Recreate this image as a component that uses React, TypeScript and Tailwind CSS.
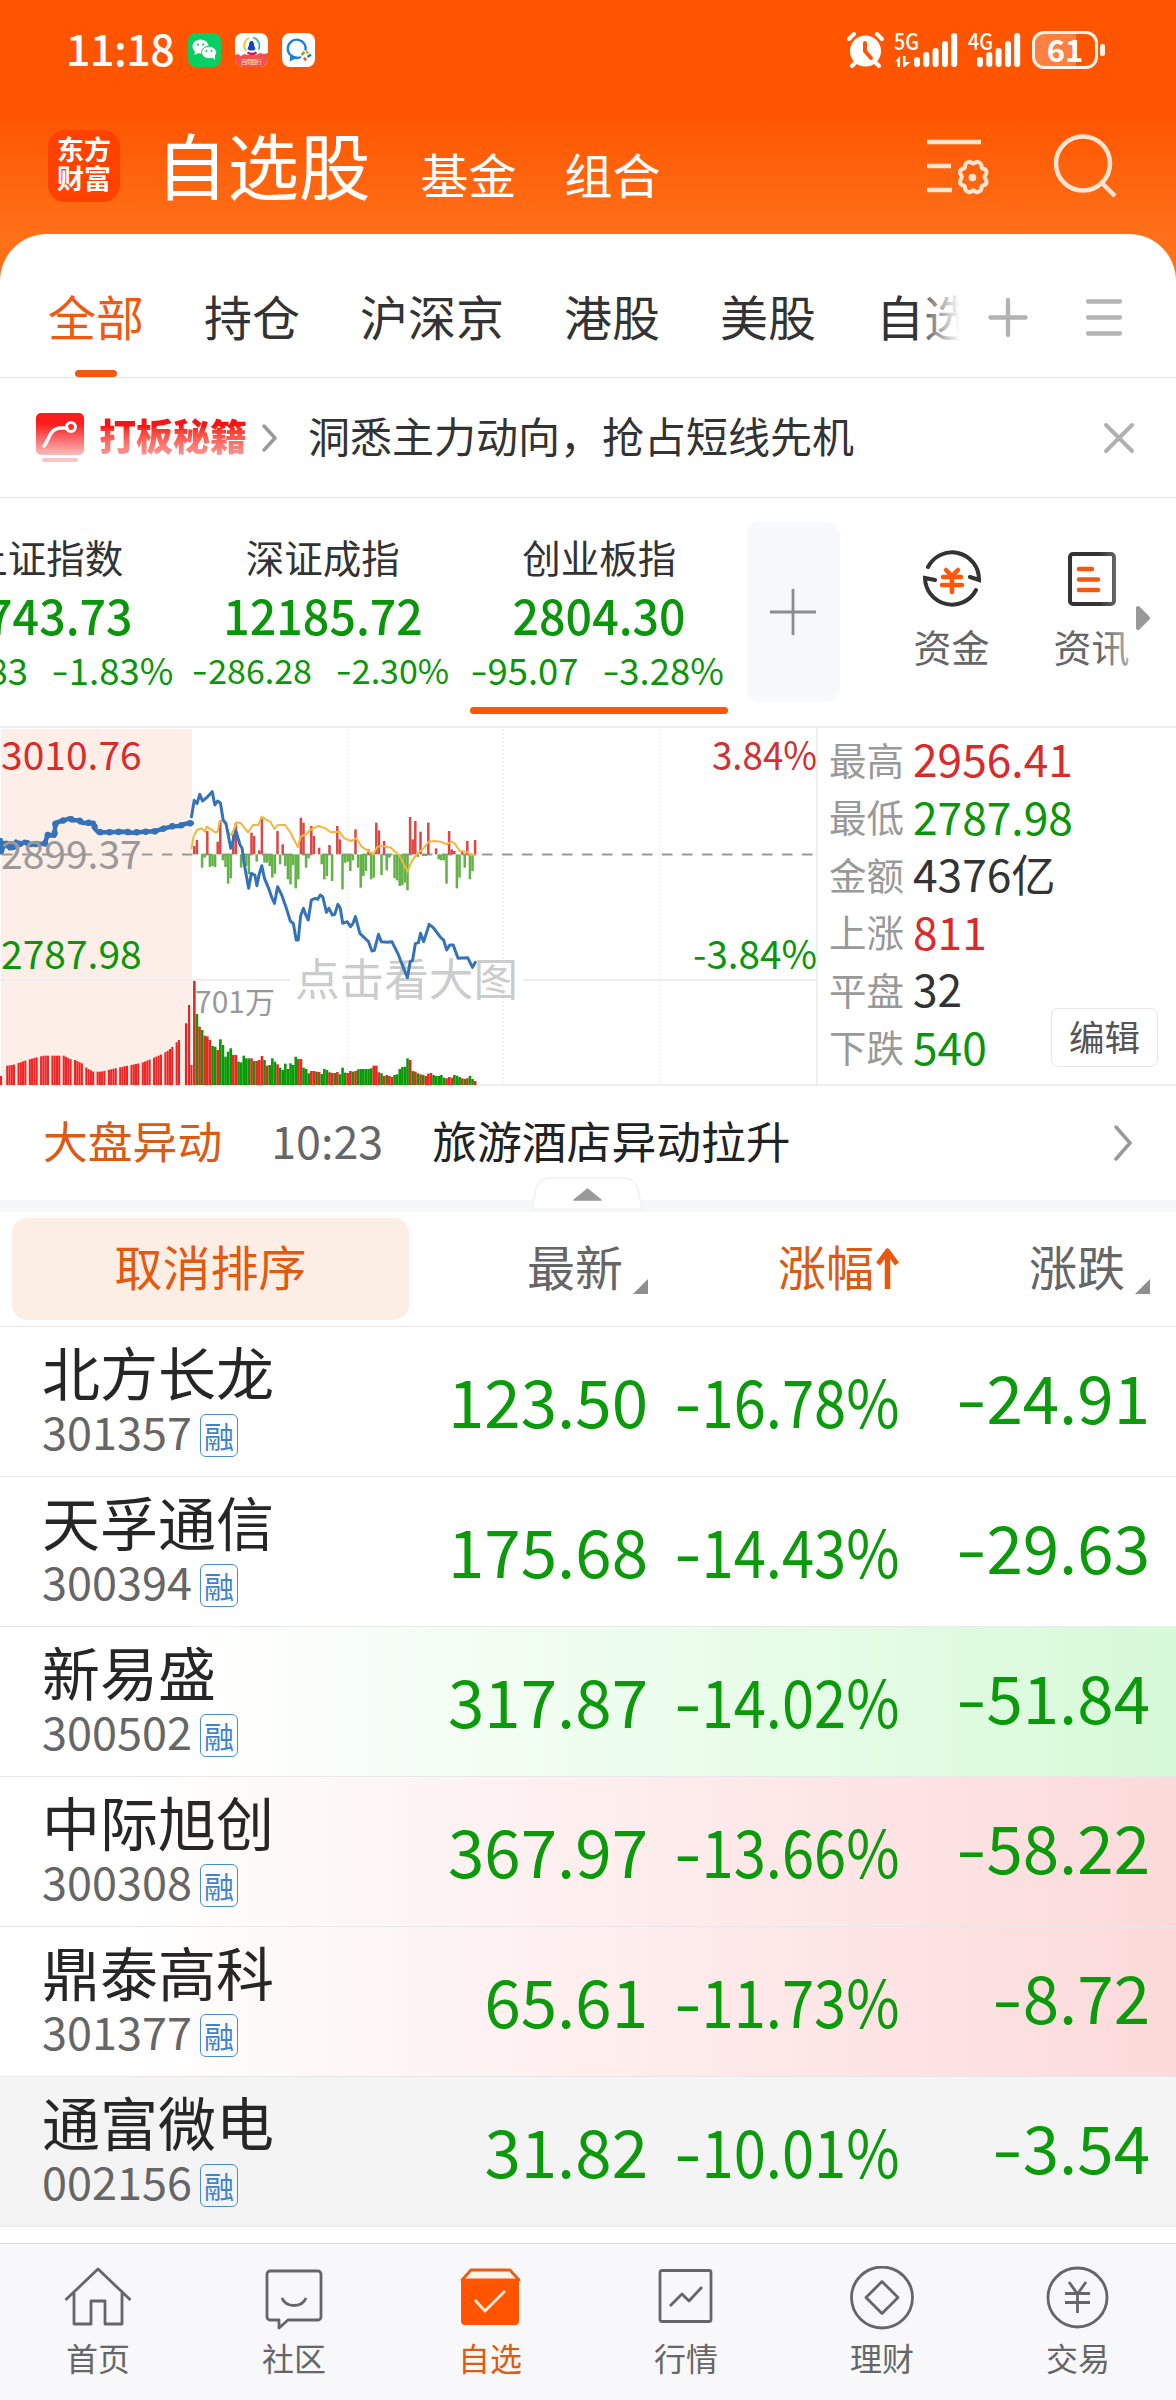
import type { ReactNode } from 'react';
import clsx from 'clsx';

const tabs = ['全部', '持仓', '沪深京', '港股', '美股', '自选'];

const indices = [
  { name: '上证指数', value: '3743.73', change: '-69.83', pct: '-1.83%', size: 'text-[36.500px] pl-[5px]' },
  { name: '深证成指', value: '12185.72', change: '-286.28', pct: '-2.30%', size: 'text-[34px]' },
  { name: '创业板指', value: '2804.30', change: '-95.07', pct: '-3.28%', size: 'text-[36.500px]', active: true },
];

const stats = [
  { label: '最高', value: '2956.41', color: 'text-[#d92b2b]' },
  { label: '最低', value: '2787.98', color: 'text-[#0a960a]' },
  { label: '金额', value: '4376亿', color: 'text-[#333]' },
  { label: '上涨', value: '811', color: 'text-[#d92b2b]' },
  { label: '平盘', value: '32', color: 'text-[#333]' },
  { label: '下跌', value: '540', color: 'text-[#0a960a]' },
];

const stocks = [
  { name: '北方长龙', code: '301357', price: '123.50', pct: '-16.78%', change: '-24.91', bg: 'bg-white' },
  { name: '天孚通信', code: '300394', price: '175.68', pct: '-14.43%', change: '-29.63', bg: 'bg-white' },
  { name: '新易盛', code: '300502', price: '317.87', pct: '-14.02%', change: '-51.84', bg: 'bg-linear-to-r from-white from-15% to-[#d7fad8]' },
  { name: '中际旭创', code: '300308', price: '367.97', pct: '-13.66%', change: '-58.22', bg: 'bg-linear-to-r from-white from-10% to-[#fcdada]' },
  { name: '鼎泰高科', code: '301377', price: '65.61', pct: '-11.73%', change: '-8.72', bg: 'bg-linear-to-r from-white from-10% to-[#fcdada]' },
  { name: '通富微电', code: '002156', price: '31.82', pct: '-10.01%', change: '-3.54', bg: 'bg-[#f4f4f4]' },
];

/* ---------- chart data, in plot units (x 0-1568, y 36-1110) ---------- */

const preLine =
  '0,378 4,412 12,384 22,384 28,400 40,398 46,380 60,388 72,380 90,390 110,386 130,387 138,360 158,362 161,324 178,318 192,314 202,310 214,316 230,316 240,324 272,323 276,342 286,352 310,352 360,350 385,353 420,350 450,349 470,342 500,334 520,333 540,326 557,324';

const priceLine =
  '556,305 564,256 572,266 580,238 588,258 600,248 616,230 624,270 632,258 640,264 648,315 656,325 670,400 685,348 697,390 703,400 708,440 715,480 722,520 730,475 740,480 746,512 752,480 760,452 768,490 780,520 790,550 797,565 806,515 818,540 830,575 843,618 852,626 860,675 866,675 873,602 881,580 888,600 895,615 904,555 915,550 922,553 930,540 937,545 948,592 955,580 965,600 972,598 981,568 988,580 995,625 1008,620 1018,635 1025,625 1032,605 1045,655 1060,670 1070,680 1080,708 1087,706 1099,658 1107,680 1125,682 1138,680 1155,715 1170,755 1183,788 1191,740 1198,736 1206,686 1215,683 1221,655 1230,680 1238,655 1246,628 1258,638 1280,668 1288,675 1297,705 1306,690 1316,690 1330,730 1358,728 1372,757 1380,742';

const avgLine =
  '556,400 562,365 572,345 585,340 595,350 600,335 612,343 625,352 632,350 638,318 648,318 656,330 665,355 672,360 688,322 700,325 720,352 735,330 750,330 760,305 775,315 785,320 797,342 806,330 828,330 843,352 865,396 873,365 890,357 900,345 925,333 945,340 960,352 985,350 1000,370 1020,378 1035,370 1050,395 1084,418 1095,395 1110,393 1135,398 1160,422 1183,470 1195,440 1210,418 1230,400 1245,380 1262,378 1280,380 1297,388 1310,380 1320,385 1335,408 1355,410 1370,421 1380,420';

// net flow per minute, above zero is buying
const flow = [
  25, 43, 0, -40, -10, 70, -38, -35, -38, 38, 103, -18, -38, -88, -72, 60, 95, 0, -40, -10, -35, -60, 65, 55, -22,
  12, 112, -25, -25, -35, -70, -58, 70, -30, 30, -35, -75, -90, -32, -102, -75, 110, 95, -40, -12, 85, 55, 0, 20, -30,
  -75, -65, 28, -80, 0, 85, 45, -105, -25, -22, -50, -18, 75, -40, -100, -65, -50, 15, -75, -70, 95, 72, -62, 40, -48,
  -10, 0, -72, -78, -95, -92, -85, -108, 112, 45, 100, -8, 68, -5, -5, 95, 0, 0, 18, -15, -18, -18, -88, 70, 15, 10,
  -102, -70, 8, -40, 40, -75, -50, 43,
];

// minute volume, negative means the minute closed down
const volume = [
  312, -213, 175, -165, 148, 146, 135, -117, -115, 105, -137, -120, -85, -100, -110, 90, 90, -70, -68, -88, -80, -80,
  80, -72, 72, 75, 87, -75, 58, -60, -80, -70, 62, -52, -45, -64, -48, -65, -60, -85, 78, 78, -52, -48, -35, 42, 42,
  -40, 39, -33, -48, -45, 38, 36, -36, 39, -32, -52, -37, 36, 42, -40, 42, -47, -48, -48, -48, -48, -50, 58, 58, 38,
  -35, 27, -30, 27, 24, -30, -32, -48, -54, -55, -80, 75, -42, 40, -35, 32, -30, 27, 34, 36, -30, -27, -27, -30, -22,
  20, 24, 22, -30, -28, -24, 20, -18, 20, -27, -18, 12,
];

const preVolume: [number, number][] = [
  [0, 27], [18, 58], [34, 60], [70, 73], [103, 83], [124, 88], [182, 88], [200, 78], [215, 75], [235, 65], [250, 50],
  [268, 40], [290, 40], [345, 53], [410, 67], [440, 80], [470, 94], [485, 103], [500, 117], [516, 135],
];

function preVolumeAt(x: number) {
  const i = preVolume.findIndex((p) => p[0] >= x);
  if (i < 0) return preVolume[preVolume.length - 1][1];
  if (i === 0) return preVolume[0][1];
  const [x0, y0] = preVolume[i - 1];
  const [x1, y1] = preVolume[i];
  return y0 + ((y1 - y0) * (x - x0)) / (x1 - x0);
}

function Chart() {
  const preBars: number[] = [0];
  for (let g = 18; g < 515; g += 32.8) {
    for (let b = 0; b < 4; b++) {
      if (g + b * 6.6 < 518) preBars.push(g + b * 6.6);
    }
  }
  return (
    <svg width="818" height="358" viewBox="0 0 818 358" className="block shrink-0">
      <rect x="1" y="1" width="191" height="356" fill="#fdeee8" />
      <g stroke="#ededed" strokeWidth="1" strokeDasharray="2 2">
        <path d="M98 1V357M347.5 1V357M503.5 1V357M659.5 1V357" />
      </g>
      <path d="M0 252H290M523 252H818" stroke="#eeeeee" strokeWidth="2" />
      <path d="M0 357H818M817 0V357" stroke="#eeeeee" strokeWidth="2" />
      <path d="M2 126.500H814" stroke="#999" strokeWidth="2" strokeDasharray="10.500 9.500" />
      <text x="295" y="268" fontSize="44.600" fill="#cccccc">点击看大图</text>
      <g transform="translate(0 -13) scale(.3444 .33333)">
        {preBars.map((x) => (
          <rect key={x} x={x} y={1110 - preVolumeAt(x)} width="6.100" height={preVolumeAt(x)} fill="#ef2424" />
        ))}
        <path d="M537 925h7v185h-7zM546 870h6v240h-6zM553 1050h6v60h-6z" fill="#e32222" />
        {flow.map((v, i) => (
          <rect
            key={i}
            x={560.5 + i * 7.55}
            y={v > 0 ? 418 - v : 418}
            width="7.300"
            height={Math.abs(v)}
            fill={v > 0 ? '#e04545' : '#62b245'}
          />
        ))}
        {volume.map((v, i) => (
          <rect
            key={i}
            x={560.5 + i * 7.55}
            y={1110 - Math.abs(v)}
            width="7.600"
            height={Math.abs(v)}
            fill={v > 0 ? '#e62a22' : '#0a9a08'}
          />
        ))}
        <g fill="none" strokeLinejoin="round" strokeLinecap="round">
          <polyline points={avgLine} stroke="#f3b63f" strokeWidth="2" vectorEffect="non-scaling-stroke" />
          <polyline points={preLine} stroke="#3573b8" strokeWidth="4.500" vectorEffect="non-scaling-stroke" />
          <polyline points={preLine} stroke="#3573b8" strokeWidth="6.500" strokeDasharray="0.100 9" vectorEffect="non-scaling-stroke" />
          <polyline points={priceLine} stroke="#3573b8" strokeWidth="3" vectorEffect="non-scaling-stroke" />
        </g>
      </g>
      <g fontSize="39">
        <text x="1" y="42" fill="#d92b2b">3010.76</text>
        <text x="1" y="141" fill="#999">2899.37</text>
        <text x="1" y="241" fill="#0a960a">2787.98</text>
        <text x="817" y="42" fill="#cf3232" textAnchor="end" textLength="105" lengthAdjust="spacingAndGlyphs">3.84%</text>
        <text x="817" y="241" fill="#0a960a" textAnchor="end" textLength="124" lengthAdjust="spacingAndGlyphs">-3.84%</text>
      </g>
      <text x="195" y="285" fontSize="30" fill="#999">701万</text>
    </svg>
  );
}

/* figures with a longer minus stroke than the font has */
function Num({ children, className }: { children: string; className?: string }) {
  const negative = children.startsWith('-');
  return (
    <span className={clsx('whitespace-nowrap leading-none', className)}>
      {negative && <span className="inline-block origin-right -translate-y-[2%] scale-x-[1.35]">-</span>}
      {negative ? children.slice(1) : children}
    </span>
  );
}

const bars = [[0, 24, 10], [9.3, 19, 15], [18.6, 15, 19], [28, 8, 26], [37.2, 0, 34]];

function Signal({ label, arrows }: { label: string; arrows?: boolean }) {
  const offset = arrows ? 19 : 8;
  return (
    <svg width={offset + 43} height="36" viewBox={`0 0 ${offset + 43} 36`} fill="#fff" className="shrink-0 overflow-visible">
      <text x="-1" y="18" fontSize="23" fontWeight="500" textLength="25" lengthAdjust="spacingAndGlyphs">{label}</text>
      {arrows && <path d="M0 30l5-6v11h-2.500v-6zM8 24h2.500v6h5L9.500 35H8z" />}
      {bars.map(([x, y, h]) => (
        <rect key={x} x={offset + x} y={y + 1} width="6" height={h} rx="3" />
      ))}
    </svg>
  );
}

function StatusBar() {
  return (
    <div className="flex h-[100px] items-center pr-[71px] pl-[66px] text-white">
      <span className="-mt-[5px] w-[110px] text-[43px] leading-none font-medium tracking-[-0.5px]">11:18</span>
      <div className="ml-[12px] flex gap-[14px]">
        <svg width="33" height="34" viewBox="0 0 33 34">
          <rect width="33" height="34" rx="8" fill="#07cf62" />
          <g fill="#fff">
            <ellipse cx="12.500" cy="13.500" rx="8" ry="7" />
            <path d="M7 18l-.500 4 4-2z" />
            <ellipse cx="21" cy="19.500" rx="7.500" ry="6.300" stroke="#07cf62" strokeWidth="1" />
            <path d="M24 24l3 3v-5z" />
          </g>
          <g fill="#07cf62">
            <circle cx="10" cy="11.500" r="1.100" />
            <circle cx="15" cy="11.500" r="1.100" />
            <circle cx="18.500" cy="18" r="1" />
            <circle cx="23.500" cy="18" r="1" />
          </g>
        </svg>
        <svg width="33" height="34" viewBox="0 0 33 34">
          <rect width="33" height="34" rx="8" fill="#fff" />
          <path d="M0 22l3-1 3 2 3-2 4 1 4-1 4 1 4-2 4 1 4-1v6a8 8 0 0 1-8 8H8a8 8 0 0 1-8-8z" fill="#f4504e" />
          <g fill="none" strokeWidth="1.800">
            <path d="M14 5a8.500 8.500 0 0 0-3 13" stroke="#f1c232" />
            <path d="M18 4.500a8.500 8.500 0 0 1 5.500 12" stroke="#3bb6a0" />
            <path d="M12.500 19.500a8.500 8.500 0 0 0 9 0" stroke="#d4145a" strokeWidth="2.400" />
          </g>
          <path d="M16.500 8c2 0 2.500 2 2.500 4l1.500 4-2 1.500h-4l-2-1.500 1.500-4c0-2 .500-4 2.500-4z" fill="#1048b8" />
          <text x="6" y="31" fontSize="6" fill="#ffe7b0" textLength="21">西南银行</text>
        </svg>
        <svg width="33" height="34" viewBox="0 0 33 34" fill="none">
          <rect width="33" height="34" rx="8" fill="#fff" />
          <path d="M23.500 17.500A9 9 0 1 0 13 24.500l-4 2 .500-5" stroke="#1b7fd8" strokeWidth="2.400" />
          <path d="M13 24.800q3 .700 6-.800" stroke="#1b7fd8" strokeWidth="2.400" />
          <path d="M19.500 22l3-3" stroke="#7bb32e" strokeWidth="2.600" />
          <path d="M24 18l2 2.500" stroke="#f0a020" strokeWidth="2.600" />
          <path d="M25.500 24l3.500-2.500" stroke="#1b7fd8" strokeWidth="2.600" />
          <path d="M22 24.500l2 3" stroke="#e8622c" strokeWidth="2.600" />
        </svg>
      </div>
      <div className="ml-auto flex items-center">
        <svg width="37" height="36" viewBox="0 0 37 36">
          <circle cx="18.500" cy="19" r="15.500" fill="#fff" />
          <path d="M2 7l5-5M30 2l5 5M8 31l-3 3M29 31l3 3" stroke="#fff" strokeWidth="4" strokeLinecap="round" />
          <path d="M18 11v8l6 7" fill="none" stroke="#ff5500" strokeWidth="4" strokeLinecap="round" strokeLinejoin="round" />
        </svg>
        <div className="ml-[11px] flex gap-[12px]">
          <Signal label="5G" arrows />
          <Signal label="4G" />
        </div>
        <div className="ml-[12px] flex h-[38px] w-[66px] shrink-0 items-center justify-center rounded-[12px] border-3 border-[#fff3ea] bg-linear-to-r from-[#ff8040] from-68% to-transparent to-68%">
          <span className="-mt-[4px] text-[31px] leading-none font-bold">61</span>
        </div>
        <div className="ml-[2px] h-[12px] w-[5px] rounded-[2px] bg-[#fff3ea]" />
      </div>
    </div>
  );
}

function Header() {
  return (
    <div className="flex h-[134px] items-center pb-[3px] pl-[48px] text-white">
      <div className="flex size-[72px] flex-col items-center justify-center rounded-[17px] bg-[#ff4200] pb-[6px] text-[27px] leading-[29px] font-bold">
        <span>东方</span>
        <span>财富</span>
      </div>
      <span className="-mt-[3px] ml-[36px] text-[71.500px] leading-none">自选股</span>
      <span className="mt-[15px] ml-[50px] text-[48px] leading-none">基金</span>
      <span className="mt-[15px] ml-[48px] text-[48px] leading-none">组合</span>
      <svg width="66" height="66" viewBox="0 0 66 66" fill="none" stroke="#ffe4d0" strokeWidth="4.500" className="ml-[265px]">
        <path d="M1 9h54M1 33h24M1 57h25" />
        <path
          d="M41.500 29.500q2.500-1.500 4.500.500 1 1.200 2.500 0 2-2 4.500-.500 2.500 1 2.500 4 0 1.800 2 2.200 3 .800 3 3.800 0 1.500-1.500 3-1 1.500 0 3 1.500 1.500 1.500 3 0 3-3 3.800-2 .400-2 2.200 0 3-2.500 4-2.500 1.500-4.500-.500-1.200-1.200-2.500 0-2 2-4.500.500-2.500-1-2.500-4 0-1.800-2-2.200-3-.800-3-3.800 0-1.500 1.500-3 1-1.500 0-3-1.500-1.500-1.500-3 0-3 3-3.800 2-.400 2-2.200 0-3 2.500-4z"
          strokeWidth="4"
          strokeLinejoin="round"
        />
        <circle cx="46.500" cy="44.500" r="3.800" fill="#ffe4d0" stroke="none" />
      </svg>
      <svg width="66" height="66" viewBox="0 0 66 66" fill="none" stroke="#ffe4d0" strokeWidth="4.500" className="ml-[60px]">
        <circle cx="31" cy="30.500" r="27" />
        <path d="M50 50l13 13" />
      </svg>
    </div>
  );
}

function TabBar() {
  return (
    <div className="flex h-[144px] items-stretch border-b border-[#e3e3e3]">
      <div className="relative flex w-[960px] gap-[60px] overflow-hidden pl-[48px]">
        {tabs.map((tab, i) => (
          <div key={tab} className={clsx('flex shrink-0 flex-col items-center', i === 0 ? 'text-[#f0590f]' : 'text-[#333]')}>
            <span className="mt-[57px] text-[48px] leading-none">{tab}</span>
            {i === 0 && <span className="mt-auto h-[7px] w-[42px] rounded-full bg-[#f4570f]" />}
          </div>
        ))}
        <div className="absolute top-0 right-0 h-full w-[42px] bg-linear-to-r from-white/10 to-white" />
      </div>
      <svg width="140" height="48" viewBox="0 0 140 48" fill="none" stroke="#b2b2b2" strokeWidth="4.300" strokeLinecap="round" className="mt-[59px] ml-[26px]">
        <path d="M4.500 24.500h35M22 7v35M102 8.500h32M102 24.500h32M102 40.500h32" />
      </svg>
    </div>
  );
}

function PromoBar() {
  return (
    <div className="flex h-[120px] items-center border-b border-[#e3e3e3] pl-[36px]">
      <svg width="48" height="50" viewBox="0 0 48 50" fill="none">
        <defs>
          <linearGradient id="promo" x1="0" y1="0" x2="0" y2="1">
            <stop offset=".25" stopColor="#fb1c1c" />
            <stop offset="1" stopColor="#f9bcbc" />
          </linearGradient>
        </defs>
        <rect width="48" height="42" rx="5" fill="url(#promo)" />
        <path d="M8 33c5-5 5-17 16-18h7" stroke="#fff" strokeWidth="3.500" strokeLinecap="round" />
        <circle cx="35" cy="14" r="4.500" stroke="#fff" strokeWidth="3" />
        <rect x="6" y="45" width="36" height="4" rx="2" fill="#f8c4c4" />
      </svg>
      <span className="mt-[-6px] ml-[15px] bg-linear-to-b from-[#fb1212] from-30% to-[#f79c9c] bg-clip-text text-[37px] leading-[44px] font-black text-transparent">
        打板秘籍
      </span>
      <svg width="18" height="30" viewBox="0 0 18 30" fill="none" stroke="#999" strokeWidth="3.500" strokeLinecap="round" strokeLinejoin="round" className="ml-[14px]">
        <path d="M3 3l11 12L3 27" />
      </svg>
      <span className="mt-[-6px] ml-[29px] text-[42px] leading-none text-[#333]">洞悉主力动向，抢占短线先机</span>
      <svg width="32" height="32" viewBox="0 0 32 32" stroke="#b0b0b0" strokeWidth="4" strokeLinecap="round" className="ml-[249px]">
        <path d="M3 3l26 26M29 3L3 29" />
      </svg>
    </div>
  );
}

function IndexStrip() {
  return (
    <div className="flex h-[230px] overflow-hidden border-b-2 border-[#eee]">
      <div className="-ml-[92px] flex shrink-0">
        {indices.map((item) => (
          <div key={item.name} className="flex w-[276.500px] flex-col items-center whitespace-nowrap text-[#0a960a]">
            <span className="mt-[37px] text-[38.500px] leading-[42px] text-[#333]">{item.name}</span>
            <span className="mt-[12px] scale-x-[0.95] text-[49px] leading-[50px] font-medium">{item.value}</span>
            <div className={clsx('mt-[12px] flex h-[38px] items-center justify-center gap-[28px]', item.size)}>
              <Num>{item.change}</Num>
              <Num>{item.pct}</Num>
            </div>
            {item.active && <span className="mt-[18px] h-[7px] w-[258px] rounded-full bg-[#fd5808]" />}
          </div>
        ))}
      </div>
      <div className="mt-[24px] ml-[9px] flex h-[180px] w-[93px] shrink-0 items-center justify-center rounded-[12px] bg-[#f7f8fa]">
        <svg width="46" height="46" stroke="#8c8c8c" strokeWidth="2.800"><path d="M0 23h46M23 0v46" /></svg>
      </div>
      <div className="ml-[73px] flex w-[78px] shrink-0 flex-col items-center">
        <svg width="60" height="60" viewBox="0 0 60 60" fill="none" stroke="#333" strokeWidth="4" strokeLinecap="round" className="mt-[50px]">
          <path d="M6 19a27 27 0 0 1 51 13l-9-3M54 42A27 27 0 0 1 3 30l10 2" />
          <path d="M24 22l6 6 6-6M21 29h18M20 37h20M30 28v16" stroke="#fd5808" strokeWidth="4.500" />
        </svg>
        <span className="mt-[16px] text-[38px] leading-[44px] text-[#666]">资金</span>
      </div>
      <div className="relative ml-[62px] flex w-[78px] shrink-0 flex-col items-center">
        <svg width="50" height="56" viewBox="0 0 50 56" fill="none" stroke="#333" strokeWidth="4" strokeLinecap="round" className="mt-[53px]">
          <rect x="3" y="3" width="44" height="50" rx="3" />
          <path d="M12 18h13M12 28.500h19M12 39h19" stroke="#f05a10" strokeWidth="4.500" />
        </svg>
        <span className="mt-[17px] text-[38px] leading-[44px] text-[#666]">资讯</span>
        <div className="absolute top-[40px] right-0 h-[140px] w-[32px] bg-linear-to-r from-transparent to-white/50" />
      </div>
      <svg width="16" height="26" viewBox="0 0 16 26" className="mt-[107px] ml-[4px] shrink-0">
        <path d="M3 3v20L13 13z" fill="#999" stroke="#999" strokeWidth="4" strokeLinejoin="round" />
      </svg>
    </div>
  );
}

function ChartPanel() {
  return (
    <div className="relative flex h-[358px] border-b-2 border-[#eee]">
      <Chart />
      <div className="mt-[1.500px] flex flex-col pl-[11px]">
        {stats.map((s) => (
          <div key={s.label} className="flex h-[57.500px] items-center">
            <span className="w-[84px] text-[37.500px] leading-none text-[#999]">{s.label}</span>
            <span className={clsx('text-[44.300px] leading-none', s.color)}>{s.value}</span>
          </div>
        ))}
      </div>
      <button className="absolute right-[18px] bottom-[17px] h-[59px] w-[107px] rounded-[7px] border border-[#e6e6e6] bg-white pb-[4px] text-[35.500px] leading-none text-[#555]">
        编辑
      </button>
    </div>
  );
}

function MarketMove() {
  return (
    <div className="relative h-[126px] border-b-12 border-[#f6f7fa]">
      <div className="flex h-[108px] items-center pl-[43px] text-[44.800px] leading-none">
        <span className="text-[#dc5a12]">大盘异动</span>
        <span className="ml-[49px] w-[114px] text-[#666]">10:23</span>
        <span className="ml-[47px] text-[#222]">旅游酒店异动拉升</span>
        <svg width="22" height="36" viewBox="0 0 22 36" fill="none" stroke="#999" strokeWidth="3.500" strokeLinecap="round" className="mt-[5px] ml-[321px]">
          <path d="M4 2l14 16L4 34" />
        </svg>
      </div>
      {/* collapse handle */}
      <svg width="112" height="33" viewBox="0 0 112 33" className="absolute top-[91px] left-[531px]">
        <path d="M1 32L5 12Q8 1 20 1h72q12 0 15 11l4 20z" fill="#fff" stroke="#f1f2f4" strokeWidth="1.500" />
        <path d="M43 23L56.500 12 70 23z" fill="#999" stroke="#999" strokeWidth="1.500" strokeLinejoin="round" />
      </svg>
    </div>
  );
}

const Corner = () => (
  <svg width="15" height="15" className="mb-[32px] self-end"><path d="M15 0v15H0z" fill="#8e8e93" /></svg>
);

function SortRow() {
  return (
    <div className="flex h-[115px] items-center border-b border-[#e6e6e6] text-[48px] leading-none text-[#666]">
      <button className="ml-[12px] h-[102px] w-[397px] rounded-[15px] bg-[#fdeee5] pb-[8px] text-[#e05a10]">取消排序</button>
      <div className="flex h-full w-[239px] items-center justify-end gap-[10px]">
        <span className="-mt-[9px]">最新</span>
        <Corner />
      </div>
      <div className="flex h-full w-[251px] items-center justify-end gap-[2px] text-[#dc5a12]">
        <span className="-mt-[9px]">涨幅</span>
        <svg width="23" height="43" viewBox="0 0 23 43" fill="none" stroke="#e8590c" strokeWidth="5.500" className="mb-[3px]">
          <path d="M11.500 43V6" />
          <path d="M2 18L11.500 5 21 18" strokeLinejoin="round" strokeWidth="5" />
        </svg>
      </div>
      <div className="flex h-full w-[251px] items-center justify-end gap-[10px]">
        <span className="-mt-[9px]">涨跌</span>
        <Corner />
      </div>
    </div>
  );
}

function StockRow({ stock }: { stock: (typeof stocks)[number] }) {
  return (
    <div className={clsx('flex h-[150px] border-b border-[#e8e8e8] text-[65.500px] leading-none text-[#0a9a0a]', stock.bg)}>
      <div className="w-[400px] pl-[42px]">
        <div className="mt-[14px] text-[58px] leading-[60px] text-[#262626]">{stock.name}</div>
        <div className="mt-[8px] flex items-start">
          <span className="w-[158px] text-[45px] leading-[44px] text-[#666]">{stock.code}</span>
          <span className="mt-[5px] flex h-[43px] w-[38px] items-center justify-center rounded-[6px] border-[1.500px] border-[#4a8cd0] pb-[2px] text-[30px] leading-none text-[#3f83cc]">
            融
          </span>
        </div>
      </div>
      <Num className="mt-[40px] w-[248px] text-right">{stock.price}</Num>
      <span className="mt-[40px] flex w-[252px] justify-end">
        <Num className="origin-right scale-x-[0.885]">{stock.pct}</Num>
      </span>
      <Num className="mt-[36px] w-[250px] text-right">{stock.change}</Num>
    </div>
  );
}

const navItems: { label: string; icon: ReactNode; active?: boolean }[] = [
  {
    label: '首页',
    icon: <path d="M1.500 33L34 2l32.500 31M10 26v31h17V34h14v23h17V26" transform="translate(0 1)" />,
  },
  {
    label: '社区',
    icon: (
      <>
        <path d="M10 5h48a3 3 0 0 1 3 3v43a3 3 0 0 1-3 3H28l-9 8V54h-9a3 3 0 0 1-3-3V8a3 3 0 0 1 3-3z" />
        <path d="M22 32c4 10 20 10 24 0" />
      </>
    ),
  },
  {
    label: '自选',
    active: true,
    icon: (
      <>
        <path d="M6 14L15 4h39l9 10z" fill="#fff4ea" stroke="#ee5a12" />
        <path d="M5 14h58v41a4 4 0 0 1-4 4H9a4 4 0 0 1-4-4z" fill="#ff5500" stroke="none" />
        <path d="M19 34l10 11 20-20" stroke="#ffe9d8" />
      </>
    ),
  },
  {
    label: '行情',
    icon: (
      <>
        <rect x="8" y="4.500" width="51" height="51" rx="2" />
        <path d="M18 40l12-12 7 7 13-14" />
      </>
    ),
  },
  {
    label: '理财',
    icon: (
      <>
        <circle cx="34" cy="31.500" r="30.500" />
        <path d="M34 15.500L50 31.500 34 47.500 18 31.500z" />
      </>
    ),
  },
  {
    label: '交易',
    icon: (
      <>
        <circle cx="33.500" cy="31.500" r="29.500" />
        <path d="M25 16l8.500 12L42 16M21 27.500h25M21 36.500h25M33.500 27v20" />
      </>
    ),
  },
];

function BottomNav() {
  return (
    <div className="mt-[16px] flex h-[158px] border-t border-[#dedede] bg-[#f8f8fa]">
      {navItems.map((item) => (
        <div key={item.label} className="flex w-[196px] flex-col items-center">
          <svg width="68" height="64" viewBox="0 0 68 64" fill="none" stroke="#666" strokeWidth="2.800" strokeLinejoin="round" className="mt-[22px]">
            {item.icon}
          </svg>
          <span className={clsx('mt-[7px] text-[32px] leading-[40px]', item.active ? 'text-[#e05a10]' : 'text-[#666]')}>
            {item.label}
          </span>
        </div>
      ))}
    </div>
  );
}

export default function App() {
  return (
    <div className="h-[2400px] w-[1176px] overflow-hidden bg-linear-to-b from-[#ff5500] from-[115px] to-[#ff7018] to-[234px] font-['Noto_Sans_CJK_SC',sans-serif]">
      <StatusBar />
      <Header />
      <div className="rounded-t-[47px] bg-white">
        <TabBar />
        <PromoBar />
        <IndexStrip />
        <ChartPanel />
        <MarketMove />
        <SortRow />
        {stocks.map((stock) => (
          <StockRow key={stock.code} stock={stock} />
        ))}
        <BottomNav />
      </div>
    </div>
  );
}
